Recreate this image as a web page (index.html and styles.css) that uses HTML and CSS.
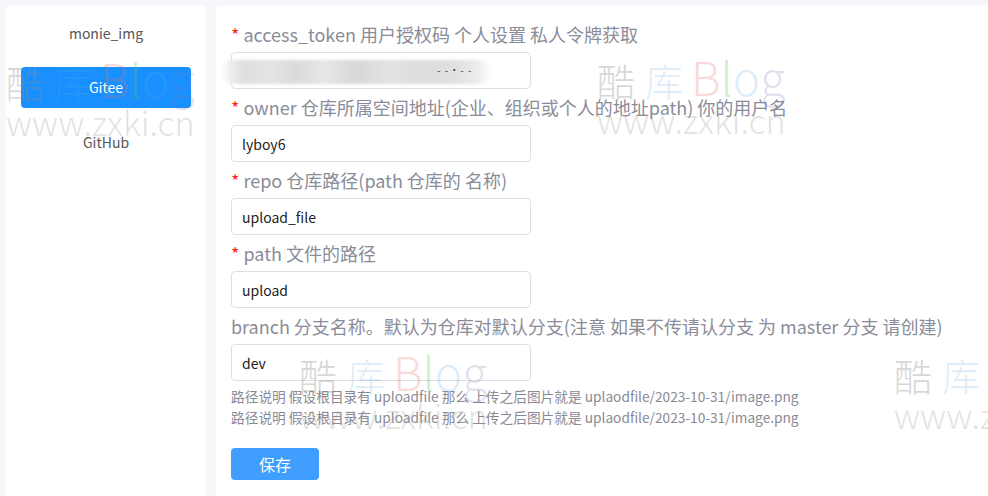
FILE: index.html
```html
<!DOCTYPE html>
<html lang="zh-CN">

<head>
    <meta charset="UTF-8">
    <meta name="viewport" content="width=device-width, initial-scale=1">
    <title>monie_img 配置</title>
    <link rel="stylesheet" href="styles.css">
</head>

<body>
<div class="layout">
    <!-- left menu -->
    <div class="side">
        <div class="side-title">monie_img</div>
        <div class="side-item active">Gitee</div>
        <div class="side-item">GitHub</div>
    </div>
    <!-- config form -->
    <div class="main">
        <div class="form-label"><span class="req">*</span> access_token 用户授权码 个人设置 私人令牌获取</div>
        <div class="input-wrap">
            <input class="form-input" type="text" value="">
            <div class="smear"></div>
            <span class="smear-dash">- -·- -</span>
        </div>
        <div class="form-label"><span class="req">*</span> owner 仓库所属空间地址(企业、组织或个人的地址path) 你的用户名</div>
        <input class="form-input" type="text" value="lyboy6">
        <div class="form-label"><span class="req">*</span> repo 仓库路径(path 仓库的 名称)</div>
        <input class="form-input" type="text" value="upload_file">
        <div class="form-label"><span class="req">*</span> path 文件的路径</div>
        <input class="form-input" type="text" value="upload">
        <div class="form-label">branch 分支名称。默认为仓库对默认分支(注意 如果不传请认分支 为 master 分支 请创建)</div>
        <input class="form-input" type="text" value="dev">
        <div class="hints">
            <p>路径说明 假设根目录有 uploadfile 那么 上传之后图片就是 uplaodfile/2023-10-31/image.png</p>
            <p>路径说明 假设根目录有 uploadfile 那么 上传之后图片就是 uplaodfile/2023-10-31/image.png</p>
        </div>
        <button class="save-btn">保存</button>
    </div>
</div>

<!-- watermark layer -->
<div class="watermarks">
    <div class="wm" style="left: 6px; top: 51px;">
        <div class="wm-top"><span class="c1">酷</span><span class="c2">库</span><span class="c3">B</span><span class="c4">l</span><span class="c5">o</span><span class="c6">g</span></div>
        <div class="wm-url">www.zxki.cn</div>
    </div>
    <div class="wm" style="left: 597px; top: 49px;">
        <div class="wm-top"><span class="c1">酷</span><span class="c2">库</span><span class="c3">B</span><span class="c4">l</span><span class="c5">o</span><span class="c6">g</span></div>
        <div class="wm-url">www.zxki.cn</div>
    </div>
    <div class="wm" style="left: 299px; top: 344px;">
        <div class="wm-top"><span class="c1">酷</span><span class="c2">库</span><span class="c3">B</span><span class="c4">l</span><span class="c5">o</span><span class="c6">g</span></div>
        <div class="wm-url">www.zxki.cn</div>
    </div>
    <div class="wm" style="left: 894px; top: 344px;">
        <div class="wm-top"><span class="c1">酷</span><span class="c2">库</span><span class="c3">B</span><span class="c4">l</span><span class="c5">o</span><span class="c6">g</span></div>
        <div class="wm-url">www.zxki.cn</div>
    </div>
</div>
</body>

</html>
```

FILE: styles.css
```css
html,
body {
    margin: 0;
    padding: 0;
    overflow: hidden;
}

body {
    background-color: #f6f7fb;
    font-family: "Noto Sans CJK SC", "Noto Sans", sans-serif;
}

.layout {
    display: flex;
    gap: 10px;
    padding: 6px 0 0 6px;
    height: 100vh;
    box-sizing: border-box;
}

.side {
    width: 200px;
    box-sizing: border-box;
    padding: 7px 15px;
    background-color: #fff;
    border-radius: 4px 4px 0 0;
    display: flex;
    flex-direction: column;
}

.side-title,
.side-item {
    height: 41px;
    line-height: 41px;
    text-align: center;
    font-size: 14px;
    color: #555;
}

.side-title {
    margin-bottom: 13px;
}

.side-item {
    border-radius: 4px;
    cursor: pointer;
}

.side-item.active {
    background-color: #1890ff;
    color: #fff;
    margin-bottom: 14px;
}

.main {
    flex: 1;
    box-sizing: border-box;
    padding: 10px 15px 0 15px;
    background-color: #fff;
    border-radius: 4px 0 0 0;
}

.form-label {
    height: 36px;
    line-height: 36px;
    font-size: 18px;
    color: #8a8c99;
    white-space: nowrap;
}

.req {
    color: #ff1f1f;
}

.input-wrap {
    position: relative;
    width: 300px;
}

.form-input {
    display: block;
    width: 300px;
    height: 37px;
    box-sizing: border-box;
    padding: 0 10px;
    border: 1px solid #dcdfe6;
    border-radius: 4px;
    font-family: "Noto Sans CJK SC", "Noto Sans", sans-serif;
    font-size: 14px;
    color: #222;
    outline: none;
}

/* blurred token */
.smear {
    position: absolute;
    left: -11px;
    top: 8px;
    width: 273px;
    height: 24px;
    border-radius: 12px;
    background: linear-gradient(90deg, rgba(236, 236, 236, 0) 0%, #ededed 4%, #dedede 9%, #e4e4e4 18%,
        #dadada 28%, #e7e7e7 38%, #d7d7d7 50%, #e3e3e3 62%, #dcdcdc 74%, #e0e0e0 86%, #ececec 94%, rgba(236, 236, 236, 0) 100%);
    filter: blur(1.5px);
}

.smear-dash {
    position: absolute;
    left: 206px;
    top: 10px;
    font-size: 10px;
    letter-spacing: 1px;
    color: #444;
}

.hints {
    padding-top: 5px;
    margin-bottom: 20px;
}

.hints p {
    margin: 0;
    font-size: 13.7px;
    line-height: 21px;
    color: #8a8a94;
    white-space: nowrap;
}

.save-btn {
    display: block;
    width: 88px;
    height: 32px;
    border: none;
    border-radius: 4px;
    background-color: #409eff;
    color: #fff;
    font-family: "Noto Sans CJK SC", sans-serif;
    font-size: 16px;
    cursor: pointer;
}

.watermarks {
    position: absolute;
    top: 0;
    left: 0;
    width: 988px;
    height: 496px;
    overflow: hidden;
    pointer-events: none;
}

.wm {
    position: absolute;
    width: 200px;
    font-family: "Noto Sans CJK SC", "Noto Sans", sans-serif;
    font-weight: 300;
}

.wm-top {
    height: 54px;
    line-height: 54px;
    white-space: nowrap;
}

.wm-top .c1,
.wm-top .c2 {
    font-size: 38px;
    margin-right: 10px;
}

.wm-top .c2 {
    margin-right: 8px;
}

.wm-top .c3,
.wm-top .c4,
.wm-top .c5,
.wm-top .c6 {
    font-size: 46px;
}

.wm-url {
    font-size: 34px;
    line-height: 34px;
    color: rgba(150, 150, 150, 0.28);
    white-space: nowrap;
}

.c1 {
    color: rgba(140, 140, 140, 0.35);
}

.c2 {
    color: rgba(90, 170, 230, 0.22);
}

.c3 {
    color: rgba(235, 110, 100, 0.25);
}

.c4 {
    color: rgba(90, 200, 90, 0.3);
}

.c5 {
    color: rgba(100, 170, 230, 0.22);
}

.c6 {
    color: rgba(120, 120, 180, 0.22);
}
```
